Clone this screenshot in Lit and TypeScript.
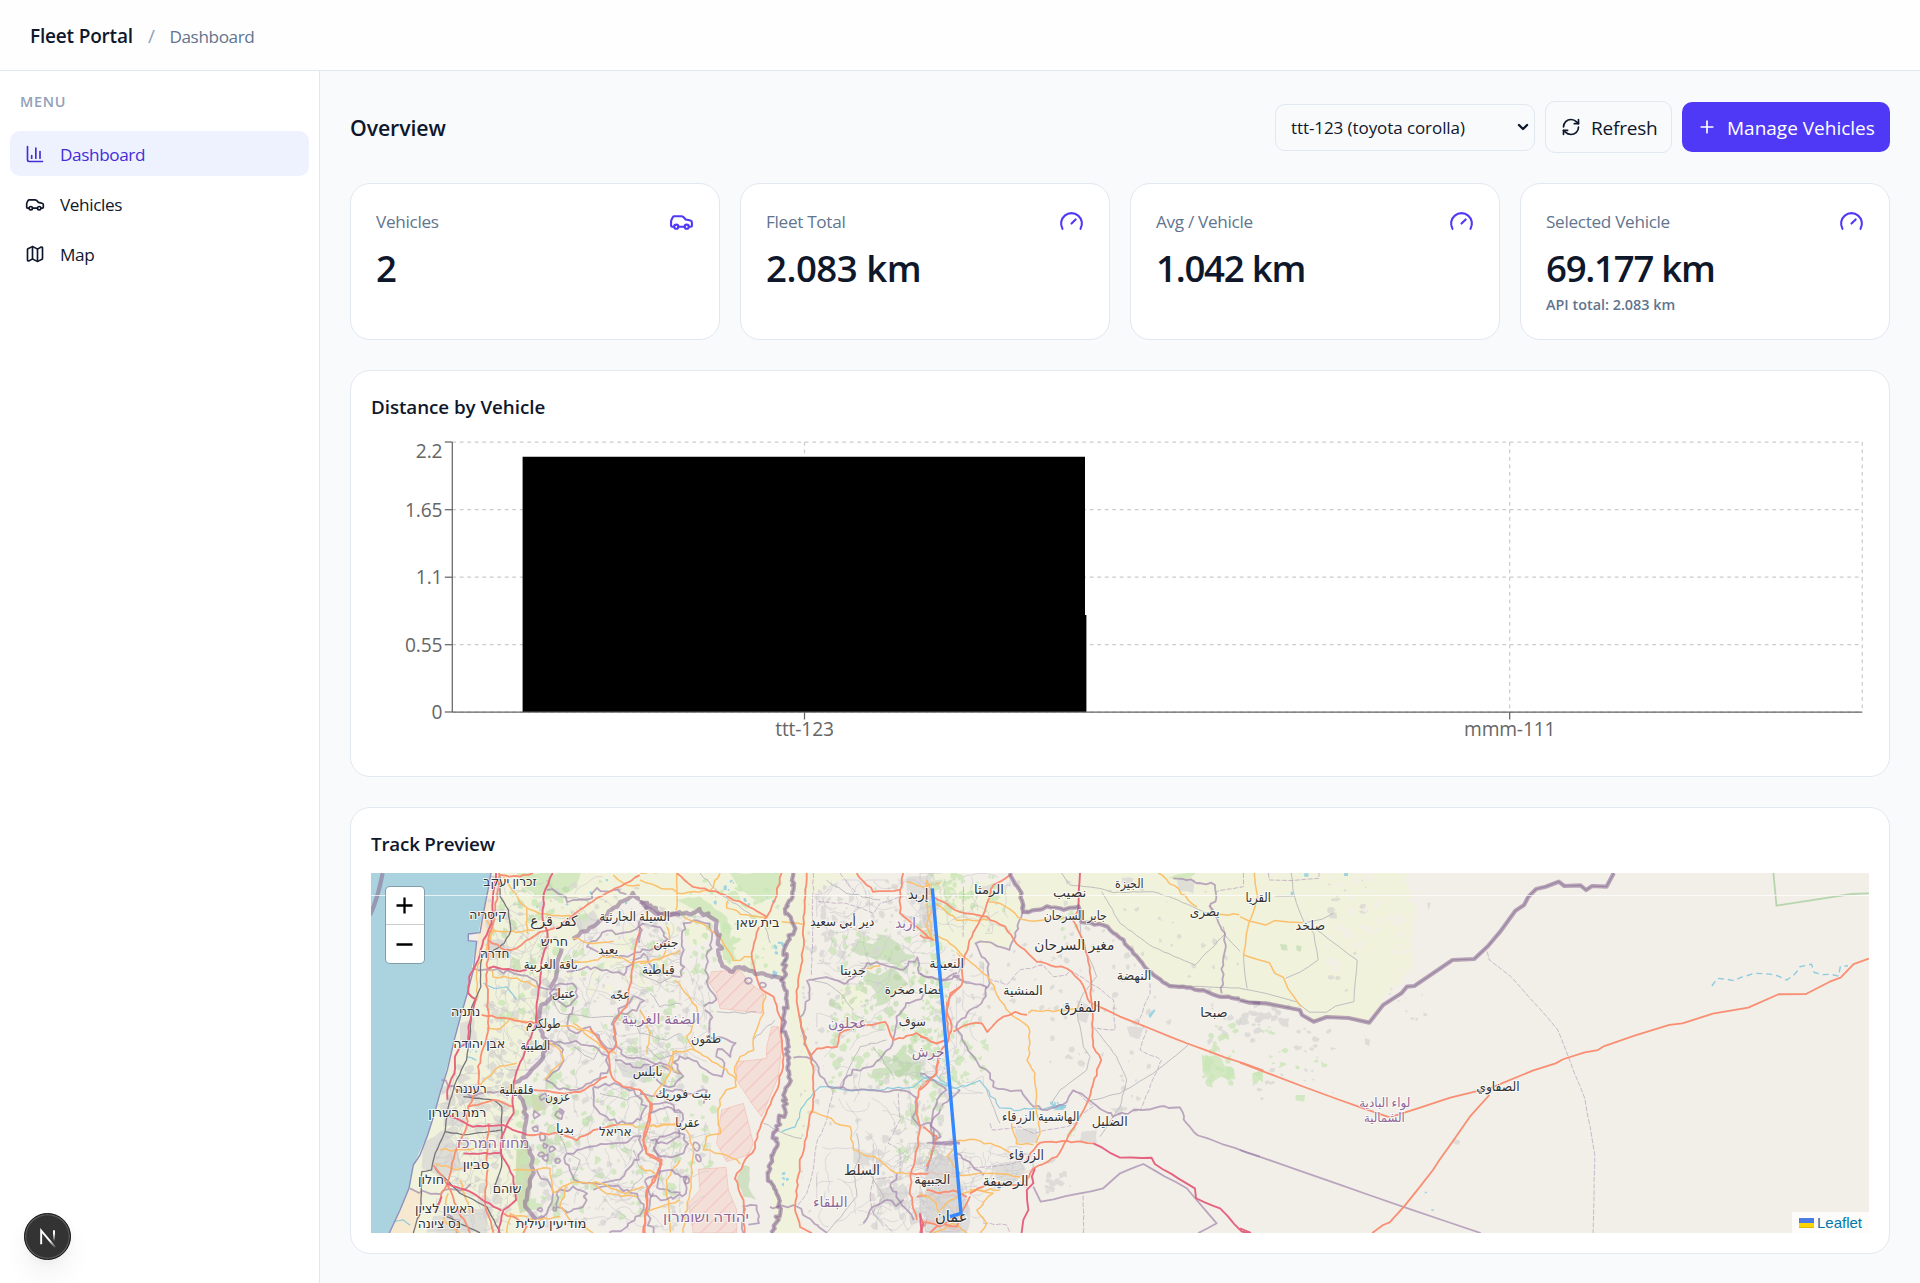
import { LitElement, html, svg, css } from "lit";
import { customElement, property } from "lit/decorators.js";
import { classMap } from "lit/directives/class-map.js";

/* ---------- icons ---------- */

const ICONS: Record<string, unknown> = {
  chart: svg`<path d="M3 3v16a2 2 0 0 0 2 2h16"/><path d="M18 17V9"/><path d="M13 17V5"/><path d="M8 17v-3"/>`,
  car: svg`<path d="M19 17h2c.6 0 1-.4 1-1v-3c0-.9-.7-1.7-1.5-1.9C18.7 10.6 16 10 16 10s-1.3-1.4-2.2-2.3c-.5-.4-1.1-.7-1.8-.7H5c-.6 0-1.1.4-1.4.9l-1.4 2.9A3.7 3.7 0 0 0 2 12v4c0 .6.4 1 1 1h2"/><circle cx="7" cy="17" r="2"/><path d="M9 17h6"/><circle cx="17" cy="17" r="2"/>`,
  map: svg`<path d="M14.106 5.553a2 2 0 0 0 1.788 0l3.659-1.83A1 1 0 0 1 21 4.619v12.764a1 1 0 0 1-.553.894l-4.553 2.277a2 2 0 0 1-1.788 0l-4.212-2.106a2 2 0 0 0-1.788 0l-3.659 1.83A1 1 0 0 1 3 19.381V6.618a1 1 0 0 1 .553-.894l4.553-2.277a2 2 0 0 1 1.788 0z"/><path d="M15 5.764v15"/><path d="M9 3.236v15"/>`,
  gauge: svg`<path d="m12 14 4-4"/><path d="M3.34 19a10 10 0 1 1 17.32 0"/>`,
  refresh: svg`<path d="M3 12a9 9 0 0 1 9-9 9.75 9.75 0 0 1 6.74 2.74L21 8"/><path d="M21 3v5h-5"/><path d="M21 12a9 9 0 0 1-9 9 9.75 9.75 0 0 1-6.74-2.74L3 16"/><path d="M8 16H3v5"/>`,
  plus: svg`<path d="M5 12h14"/><path d="M12 5v14"/>`,
  chevron: svg`<path d="m5 8.5 7 7 7-7" stroke-width="4"/>`,
};

@customElement("ui-icon")
class UiIcon extends LitElement {
  @property() name = "";
  static styles = css`
    :host { display: block; width: 20px; height: 20px; flex: none; }
    .icon { display: block; width: 100%; height: 100%; fill: none; stroke: currentColor; stroke-width: 2; stroke-linecap: round; stroke-linejoin: round; }
  `;
  render() {
    return html`<svg class="icon" viewBox="0 0 24 24">${ICONS[this.name]}</svg>`;
  }
}

/* ---------- stat card ---------- */

@customElement("stat-card")
class StatCard extends LitElement {
  @property() label = "";
  @property() value = "";
  @property() note = "";
  @property() icon = "";
  static styles = css`
    :host { display: block; box-sizing: border-box; height: 157px; padding: 25px; border: 1px solid #e2e8f0; border-radius: 20px; background: #fff; }
    .head { display: flex; justify-content: space-between; height: 25px; }
    .label { font-size: 17.2px; line-height: 26px; letter-spacing: -0.32px; color: #62748e; }
    .icon { width: 25px; height: 25px; color: #4f39f6; }
    .value { margin-top: 9px; font-size: 36.6px; line-height: 50px; font-weight: 600; letter-spacing: -0.5px; color: #0f172b; white-space: nowrap; }
    .tight { letter-spacing: -1.25px; }
    .note { margin-top: 2px; font-size: 14.4px; line-height: 20px; font-weight: 600; color: #62748e; }
  `;
  render() {
    return html`
      <div class="head"><span class="label">${this.label}</span><ui-icon class="icon" name=${this.icon}></ui-icon></div>
      <div class=${classMap({ value: true, tight: this.value.length > 8 || this.value.startsWith("1") })}>${this.value}</div>
      ${this.note ? html`<div class="note">${this.note}</div>` : ""}
    `;
  }
}

/* ---------- bar chart ---------- */

@customElement("distance-chart")
class DistanceChart extends LitElement {
  static styles = css`
    :host { display: block; height: 320px; }
    .plot { display: block; width: 1498px; height: 320px; overflow: visible; }
    .grid { stroke: #ccc; stroke-width: 1.25; stroke-dasharray: 3.75 3.75; fill: none; }
    .axis { stroke: #666; stroke-width: 1.25; fill: none; }
    .tick { fill: #666; font-size: 19.2px; letter-spacing: -0.15px; }
  `;
  render() {
    const ys = [442, 509.7, 577.2, 644.7, 712];
    const labels = ["2.2", "1.65", "1.1", "0.55", "0"];
    const cats = [
      { name: "ttt-123", x: 804.5 },
      { name: "mmm-111", x: 1509.7 },
    ];
    return html`<svg class="plot" viewBox="371 436 1498 320">
      ${ys.map((y) => svg`<path class="grid" d="M452.3 ${y}H1862.3"/>`)}
      ${[...cats.map((c) => c.x), 1862.3].map((x) => svg`<path class="grid" d="M${x} 442V712"/>`)}
      <path d="M522.6 456.7H1085V615h1.4v97H522.6z" fill="#000"/>
      <path class="axis" d="M452.3 442V712M452.3 712H1862.3"/>
      ${ys.map((y) => svg`<path class="axis" d="M444.8 ${y}h7.5"/>`)}
      ${labels.map((t, i) => svg`<text class="tick" x="442.4" y=${(i ? ys[i] : 451) + 7} text-anchor="end">${t}</text>`)}
      ${cats.map((c) => svg`<path class="axis" d="M${c.x} 712v7.5"/><text class="tick" x=${c.x} y="736.3" text-anchor="middle">${c.name}</text>`)}
    </svg>`;
  }
}

/* ---------- map ---------- */

type Pt = [number, number];

const rng = (seed: number) => () => {
  seed = (seed * 1664525 + 1013904223) >>> 0;
  return seed / 4294967296;
};

const pts = (s: string): Pt[] => s.trim().split(/\s+/).map((p) => p.split(",").map(Number) as Pt);

/** Polyline with a natural-looking deviation of `amp` units every `step` units. */
const wig = (s: string, amp = 5, step = 14): string => {
  const p = pts(s);
  const r = rng(p.length * 977 + Math.round(p[0][0] * 13 + p[0][1]));
  let d = `M${p[0]}`;
  for (let i = 1; i < p.length; i++) {
    const [x0, y0] = p[i - 1];
    const [x1, y1] = p[i];
    const n = Math.max(1, Math.round(Math.hypot(x1 - x0, y1 - y0) / step));
    for (let k = 1; k <= n; k++) {
      const e = k === n ? 0.35 : 1;
      const x = x0 + ((x1 - x0) * k) / n + (r() - 0.5) * 2 * amp * e;
      const y = y0 + ((y1 - y0) * k) / n + (r() - 0.5) * 2 * amp * e;
      d += `L${x.toFixed(1)} ${y.toFixed(1)}`;
    }
  }
  return d;
};

/** Many small irregular patches scattered inside a box. */
const patches = (x: number, y: number, w: number, h: number, n: number, size: number, seed: number): string => {
  const r = rng(seed);
  let d = "";
  for (let i = 0; i < n; i++) {
    const cx = x + r() * w;
    const cy = y + r() * h;
    const s = size * (0.35 + r());
    const k = 6;
    for (let j = 0; j < k; j++) {
      const a = (j / k) * Math.PI * 2;
      const q = s * (0.4 + r() * 0.8);
      d += `${j ? "L" : "M"}${(cx + Math.cos(a) * q).toFixed(1)} ${(cy + Math.sin(a) * q).toFixed(1)}`;
    }
    d += "Z";
  }
  return d;
};

/** Meandering short streets in a box. */
const streets = (x: number, y: number, w: number, h: number, n: number, len: number, seed: number): string => {
  const r = rng(seed);
  let d = "";
  for (let i = 0; i < n; i++) {
    let cx = x + r() * w;
    let cy = y + r() * h;
    let a = r() * 6.28;
    d += `M${cx.toFixed(1)} ${cy.toFixed(1)}`;
    for (let k = 0; k < 9; k++) {
      a += (r() - 0.5) * 1.3;
      cx = Math.min(x + w, Math.max(x, cx + (Math.cos(a) * len) / 9));
      cy = Math.min(y + h, Math.max(y, cy + (Math.sin(a) * len) / 9));
      d += `L${cx.toFixed(1)} ${cy.toFixed(1)}`;
    }
  }
  return d;
};

/* Each sheet is surveyed on its own grid: origin (map px) and units per px. */
interface Sheet { ox: number; sx: number }
const SHEETS: Record<string, Sheet> = {
  A: { ox: -11, sx: 1 / 3 },
  B: { ox: 269, sx: 1 / 3 },
  C: { ox: 549, sx: 1 / 3 },
  D: { ox: 869, sx: 680 / 1568 },
};
const on = (k: string, body: unknown) =>
  svg`<g transform="translate(${SHEETS[k].ox} -13) scale(${SHEETS[k].sx} 0.33333)">${body}</g>`;

const lines = (cls: string, list: string[], amp = 3, step = 16) =>
  list.map((s) => svg`<path class="ln ${cls}" d=${wig(s, amp, step)}/>`);
const area = (cls: string, s: string, amp = 4) => svg`<path class=${cls} d=${wig(s, amp, 20) + "Z"}/>`;

type Label = [string, string, number, number, number, string?];
const LABELS: Label[] = [
  ["A", "זכרון יעקב", 450, 68, 160],
  ["A", "קיסריה", 384, 165, 112],
  ["A", "كفر قرع", 582, 183, 142, "lg"],
  ["A", "السيلة الحارثية", 824, 172, 212],
  ["A", "חריש", 583, 246, 82],
  ["A", "חדרה", 404, 282, 88],
  ["A", "يعبد", 745, 271, 60],
  ["B", "جنين", 78, 250, 76],
  ["A", "باقة الغربية", 572, 316, 162],
  ["B", "قباطية", 55, 330, 98],
  ["A", "عتيل", 611, 402, 72],
  ["A", "عجّه", 780, 407, 58],
  ["A", "נתניה", 317, 457, 88],
  ["A", "طولكرم", 550, 494, 104],
  ["A", "אבן יהודה", 358, 552, 156],
  ["A", "الطيبة", 526, 560, 90],
  ["B", "الضفة الغربية", 62, 477, 235, "area"],
  ["A", "نابلس", 863, 638, 90],
  ["A", "רעננה", 333, 689, 94],
  ["A", "قلقيلية", 469, 690, 104],
  ["A", "عزون", 593, 711, 76],
  ["B", "بيت فوريك", 130, 704, 168],
  ["A", "רמת השרון", 292, 761, 174],
  ["A", "بديا", 615, 808, 54],
  ["A", "אריאל", 766, 818, 98],
  ["B", "عقربا", 143, 789, 74],
  ["A", "מחוז המרכז", 399, 849, 218, "area"],
  ["A", "סביון", 348, 915, 80],
  ["A", "חולון", 213, 960, 78],
  ["A", "שוהם", 441, 989, 86],
  ["A", "ראשון לציון", 254, 1048, 178],
  ["A", "נס ציונה", 238, 1093, 130],
  ["A", "מודיעין עילית", 573, 1093, 212],
  ["B", "יהודה ושומרון", 198, 1073, 258, "area"],
  ["B", "בית שאן", 353, 190, 130],
  ["B", "دير أبي سعيد", 607, 187, 192],
  ["B", "إربد", 834, 104, 62, "lg"],
  ["B", "إربد", 797, 190, 62, "area"],
  ["B", "جديتا", 639, 333, 78],
  ["B", "قضاء صخرة", 822, 392, 176],
  ["B", "عجلون", 622, 489, 116, "area"],
  ["B", "سوف", 817, 488, 82],
  ["B", "طمّون", 198, 539, 90],
  ["B", "جرش", 864, 578, 98, "area"],
  ["B", "السلط", 666, 930, 108, "lg"],
  ["B", "الجبيهة", 877, 962, 108],
  ["B", "البلقاء", 571, 1028, 104, "area"],
  ["C", "الرمثا", 207, 90, 90],
  ["C", "نصيب", 449, 100, 100],
  ["C", "الجيزة", 628, 73, 86],
  ["C", "بصرى", 854, 156, 90],
  ["C", "جابر السرحان", 466, 170, 190],
  ["C", "مغير السرحان", 463, 255, 240, "lg"],
  ["C", "النعيمة", 80, 314, 104],
  ["C", "النهضة", 642, 349, 104],
  ["C", "المنشية", 309, 394, 118],
  ["C", "المفرق", 481, 441, 122, "lg"],
  ["C", "صبحا", 882, 461, 82],
  ["C", "الهاشمية الزرقاء", 362, 772, 232],
  ["C", "الضليل", 569, 786, 108],
  ["C", "الزرقاء", 319, 886, 106, "lg"],
  ["C", "الرصيفة", 257, 965, 138, "lg"],
  ["C", "عمان", 94, 1074, 98, "xl"],
  ["D", "القريا", 42, 114, 58],
  ["D", "صلخد", 162, 199, 68],
  ["D", "الصفاوي", 595, 682, 100],
  ["D", "لواء البادية", 334, 731, 118, "area sm"],
  ["D", "الشمالية", 333, 775, 94, "area sm"],
];

@customElement("track-map")
class TrackMap extends LitElement {
  static styles = css`
    :host { display: block; position: relative; height: 360px; overflow: hidden; background: #f2efe9; }
    .canvas { display: block; width: 1498px; height: 360px; }
    .ln { fill: none; vector-effect: non-scaling-stroke; stroke-linejoin: round; stroke-linecap: butt; }
    .sea { fill: #aad3df; }
    .sand { fill: #f7e9d0; }
    .farm { fill: #f0f2dc; }
    .forest { fill: #b4d6a4; opacity: 0.55; }
    .scrub { fill: #c8e6b4; opacity: 0.7; }
    .scrubline { fill: #c8e6b4; opacity: 0.75; }
    .urban { fill: #d9d8d6; opacity: 0.8; }
    .dots { fill: #d5d4d0; opacity: 0.7; }
    .park { fill: #cfdcb4; }
    .mil { fill: #f3dfd8; stroke: #f2bdb3; stroke-width: 2; }
    .milhatch { fill: url(#hatch); }
    .lake { fill: #9fd3e2; }
    .coast { stroke: #8d90bd; stroke-width: 1.4; }
    .motor { stroke: #e5637f; stroke-width: 1.9; }
    .trunk { stroke: #f98e72; stroke-width: 1.8; }
    .prim { stroke: #fbc06c; stroke-width: 1.5; }
    .rail { stroke: #77757a; stroke-width: 1.3; }
    .minor { stroke: #b9b8bb; stroke-width: 0.9; }
    .faint { stroke: #c6c5ca; stroke-width: 0.6; opacity: 0.85; }
    .nation { stroke: #8f7196; stroke-width: 4.2; opacity: 0.6; }
    .nationcore { stroke: #775c86; stroke-width: 1.2; opacity: 0.4; }
    .prov { stroke: #a387ad; stroke-width: 1.8; opacity: 0.7; }
    .dash { stroke: #b69bbb; stroke-width: 1; opacity: 0.65; stroke-dasharray: 5 1.5; }
    .river { stroke: #8ecbdd; stroke-width: 1.2; }
    .wadi { stroke: #8ecbdd; stroke-width: 1.4; stroke-dasharray: 6 4; }
    .reserve { stroke: #a9d0a0; stroke-width: 1.8; opacity: 0.8; }
    .seam { fill: #fff; opacity: 0.8; }
    .track { fill: none; stroke: #3388ff; stroke-width: 3.4; stroke-linecap: butt; stroke-linejoin: round; }
    .lbl { font-family: "Noto Sans", "DejaVu Sans", sans-serif; font-size: 12.8px; font-weight: 500; fill: #333; stroke: #fff; stroke-opacity: 0.75; stroke-width: 2px; paint-order: stroke; text-anchor: middle; }
    .lg { font-size: 14.6px; }
    .xl { font-size: 16px; }
    .area { font-size: 14.6px; fill: #8f6897; }
    .sm { font-size: 12.6px; }
    .zoom { position: absolute; left: 14px; top: 12.5px; width: 39.5px; height: 78.5px; box-sizing: border-box; border: 1.5px solid rgba(0, 0, 0, 0.25); border-radius: 5px; background: #fff; background-clip: padding-box; display: flex; flex-direction: column; overflow: hidden; }
    .step { flex: 1; display: flex; align-items: center; justify-content: center; color: #000; }
    .first { border-bottom: 1px solid #ccc; }
    .glyph { width: 17px; height: 17px; stroke: #000; stroke-width: 2.3; }
    .attr { position: absolute; right: 0; bottom: 0; width: 77px; height: 21px; box-sizing: border-box; padding: 0 6px 0 7px; display: flex; align-items: center; gap: 3px; background: rgba(255, 255, 255, 0.8); color: #0078a8; font: 15px/21px "Liberation Sans", Arial, sans-serif; }
    .flag { width: 15px; height: 10px; flex: none; display: block; }
  `;
  render() {
    return html`
      <svg class="canvas" viewBox="0 0 1498 360">
        <defs>
          <pattern id="hatch" width="34" height="34" patternUnits="userSpaceOnUse" patternTransform="rotate(45)">
            <path d="M0 0V34" stroke="#efb5ac" stroke-width="4" />
          </pattern>
        </defs>
        ${this.westCoast()} ${this.valley()} ${this.northJordan()} ${this.desert()}
        <rect class="seam" x="0" y="22" width="1498" height="0.9" />
        ${LABELS.map(([k, t, cx, cy, w, cls]) => {
          const s = SHEETS[k];
          const drop = cls === "lg" || cls === "area" ? 4.6 : 3.7;
          return svg`<text class="lbl ${cls ?? ""}" x=${(cx * s.sx + s.ox).toFixed(1)} y=${(cy / 3 - 13 + drop).toFixed(1)} textLength=${(w * s.sx).toFixed(1)} lengthAdjust="spacingAndGlyphs">${t}</text>`;
        })}
        <path class="track" d="M561.3 15.3L590 340.3L579 343.7" />
      </svg>
      <div class="zoom">
        <div class="step first"><svg class="glyph" viewBox="0 0 17 17"><path d="M.5 8.5h16M8.5 .5v16" /></svg></div>
        <div class="step"><svg class="glyph" viewBox="0 0 17 17"><path d="M.5 8.5h16" /></svg></div>
      </div>
      <div class="attr">
        <svg class="flag" viewBox="0 0 15 10"><path fill="#4c7be1" d="M0 0h15v5H0z" /><path fill="#ffd500" d="M0 5h15v4H0z" /><path fill="#e0bc00" d="M0 9h15v1H0z" /></svg>
        <span>Leaflet</span>
      </div>
    `;
  }

  private westCoast() {
    const loops = [
      "690,245 740,210 790,220 850,190 900,200 925,240 870,270 790,290 720,280 680,260 690,245",
      "620,335 680,320 740,330 790,345 820,300 850,280 880,330 960,350",
      "590,375 640,370 655,410 620,440 590,420 570,400 590,375",
      "640,440 620,500 650,520 690,500 720,540 760,570 770,520 755,490 790,440 820,410 850,420 830,450 780,460",
      "555,545 600,560 610,600 580,640 560,660 600,690 650,690 700,660 740,640 745,590 700,560 650,545 600,545 555,545",
      "765,600 820,620 900,610 960,640", "770,560 800,590 860,600 930,630",
      "620,880 680,860 760,850 840,830 850,870 800,930 780,960 700,970 640,960 615,910 620,880",
      "590,1000 640,980 680,1000 670,1040 620,1060 590,1040 590,1000",
      "530,930 560,960 580,1000 560,1060 530,1090", "700,990 760,980 830,1000 850,1050 800,1100 750,1119",
      "700,680 760,670 820,690 860,740 840,780 770,790 720,760 700,720 700,680",
      "870,740 930,730 960,760", "880,860 900,900 890,980 960,1000", "880,1000 860,1060 880,1119",
      "335,325 400,330 500,345 535,380 600,390",
      "245,660 290,690 330,710 400,700 455,690", "150,985 210,1000 300,990 330,970", "290,1119 300,1080 260,1060",
      "560,90 600,100 620,125 680,120 710,85 760,90 800,100",
    ];
    return on("A", [
      svg`<path class="sea" d="M33 39H393L385 85 372 150 360 218 325 222V242L350 244 340 330 322 400 303 465 284 535 262 630 240 700 222 765 203 825 180 885 160 915 147 985 120 1050 88 1119H33Z"/>`,
      svg`<path class="farm" d="M393 39H970V165L900 160 820 110 740 170 640 240 600 300 560 400 530 480 545 560 470 670 500 780 520 900 500 1000 500 1119H88L147 985 160 915 203 825 240 700 284 535 322 400 350 244 372 150Z"/>`,
      svg`<path class="sand" d="M147 985L190 1000 178 1080 160 1119H88L120 1050ZM385 85L395 60 392 190 380 240 345 330 350 244Z"/>`,
      area("park", "470,860 500,850 515,930 505,1050 480,1060 465,990"),
      area("park", "510,700 555,710 560,750 520,760"),
      area("scrub", "470,39 660,39 640,90 560,120 500,90"),
      area("scrub", "860,60 960,39 960,90 900,100"),
      area("forest", "455,290 480,300 485,330 460,330"),
      area("urban", "190,850 250,810 290,860 300,930 240,950 185,925"),
      area("urban", "300,490 340,470 350,540 300,560"), area("urban", "280,680 350,670 380,710 300,740"),
      area("urban", "300,1060 380,1040 380,1119 200,1119 220,1070"), area("urban", "255,740 330,760 310,800 250,800"),
      area("urban", "380,240 430,240 440,300 385,300"), area("urban", "640,180 700,150 720,190 660,215"),
      area("urban", "770,610 850,600 900,640 850,670 790,650"),
      svg`<path class="dots" d="${patches(380, 60, 200, 1040, 130, 13, 11)}${patches(540, 60, 420, 1050, 230, 10, 5)}${patches(250, 620, 200, 480, 70, 16, 8)}"/>`,
      svg`<path class="scrubline" d="${patches(540, 400, 420, 700, 110, 12, 21)}${patches(400, 60, 560, 420, 70, 13, 22)}${patches(470, 640, 140, 420, 45, 16, 29)}"/>`,
      svg`<path class="forest" d="${patches(600, 500, 330, 520, 16, 11, 31)}${patches(430, 80, 200, 300, 14, 13, 32)}"/>`,
      svg`<path class="farm" d="${patches(620, 200, 330, 200, 22, 22, 77)}"/>`,
      svg`<path class="lake" d="${patches(390, 60, 560, 80, 14, 4, 41)}${patches(330, 560, 30, 50, 4, 4, 43)}"/>`,
      svg`<path class="ln faint" d="${streets(385, 50, 180, 580, 60, 110, 51)}${streets(230, 640, 220, 470, 60, 100, 52)}${streets(560, 50, 400, 1060, 110, 130, 53)}"/>`,
      lines("minor", ["600,820 620,880 660,900 640,960", "640,560 700,600 720,560", "560,60 600,110 680,120", "720,700 800,720 850,700", "820,870 850,950 790,1010", "570,400 600,460 680,470 760,470", "870,400 900,440 960,430", "800,460 840,520 920,540 960,520"]),
      lines("river", ["370,370 400,385 440,380 470,420", "100,1085 130,1080 150,1095", "320,590 350,600"]),
      svg`<path class="ln coast" d="M393 39L385 85 372 150 360 218 325 222V242L350 244 340 330 322 400 303 465 284 535 262 630 240 700 222 765 203 825 180 885 160 915 147 985 120 1050 88 1119"/>`,
      svg`<path class="ln nation" d="M68 39C60 80 50 125 30 165"/>`,
      lines("prov", loops, 7, 15),
      svg`<path class="ln prov" d="${patches(520, 690, 90, 240, 11, 11, 61)}${patches(530, 990, 60, 90, 4, 9, 62)}"/>`,
      lines("nation", ["960,165 900,165 860,145 820,100 780,125 740,165 690,205 640,235", "605,265 590,340 570,385", "600,400 545,435 530,490 560,540 545,600 510,640 460,670", "475,700 490,730 500,780 490,830 510,870 520,930 510,980 495,1040 530,1080"], 5, 13),
      lines("prim", [
        "430,50 480,130 540,160 640,170", "385,215 440,215 520,212 560,200", "500,145 500,220", "760,45 800,75 900,80 960,75", "850,45 960,90",
        "390,320 400,350 470,355 530,380", "380,505 420,505 450,475 528,490", "560,490 640,500 700,520", "640,490 720,560 770,580",
        "560,545 600,570 610,600 570,640 555,660", "640,235 700,250 760,245", "600,310 700,300 760,285 820,310", "820,310 900,300 960,270",
        "355,680 420,620 470,610", "240,870 330,870 380,855", "225,910 290,930 380,915", "460,930 570,925 580,1000 640,965 720,970 800,1000 850,980",
        "770,795 860,800 960,790", "620,975 600,1040 630,1080 700,1119", "700,970 740,1000 830,1010", "850,1060 900,1040 960,1020", "950,570 920,620 960,640", "300,960 330,1060", "840,450 870,520 860,580", "370,170 400,210 350,330 350,420",
        "265,1000 250,1080 300,1119", "440,1119 450,1060 520,1080 600,1070", "960,900 920,960 930,1119",
      ], 4),
      lines("rail", ["418,39 420,110 445,150 452,212 432,250 400,272 370,282 362,310 362,380 335,440 330,530 320,600 290,660 262,750 255,815 225,880 215,930 185,935 182,1050 160,1119", "310,710 400,720 425,740 425,920 405,975", "255,815 310,825 425,810", "225,925 300,1000 380,1040 420,1119", "260,1070 360,1119"], 1.5),
      lines("trunk", [
        "418,39 412,100 400,190 385,240 380,360 385,500 372,560 355,620 355,680 325,740 320,800 285,880 270,940 225,1060", "220,915 260,970 290,1040 330,1119",
        "385,240 435,270 470,265 540,215 600,200 660,150 740,100 840,45", "365,465 430,475 528,490", "385,790 380,960 375,1040 400,1119", "500,825 600,820 650,840 700,810 770,795",
        "420,45 480,50 520,39", "690,505 745,580 755,650 790,680 840,690 875,730 870,780 850,840 860,880 905,900 895,930 865,990 850,1119",
        "840,200 820,300 800,440 760,490 770,560 745,580", "520,690 600,700 660,695 740,650", "325,740 400,720 460,740", "430,1060 470,1075 500,1100 490,1119",
      ], 3),
      lines("motor", ["408,39 398,120 395,190 370,240 355,300 328,350 325,400 348,418 325,500 325,545 300,560 285,590 283,640 262,690 262,720", "578,39 552,100 548,180 562,215 560,260 545,300 540,370 530,430 528,490 500,560 475,620 460,670 458,720 462,760 440,795 425,830 422,880 460,950 468,1020 430,1050 415,1119", "385,325 400,320 480,335 500,328", "265,765 340,800 430,795 500,825", "310,880 420,880", "245,1010 225,1060", "260,970 300,985 340,1000 400,1040 425,1052"], 2),
    ]);
  }

  private valley() {
    const mil = ["215,335 300,330 325,365 370,400 370,460 320,455 240,445 230,400 205,365", "395,500 415,500 425,560 415,650 365,770 335,730 290,660 290,605 345,600 380,595 380,560", "245,750 310,730 325,790 340,850 325,885 260,905 230,850", "175,928 258,922 265,990 290,1050 290,1119 160,1119 145,1030 180,990"];
    return on("B", [
      svg`<path class="farm" d="M0 39H960V190L900 160 860 39H700L600 60 520 100 500 300 480 420 520 600 515 740 480 880 465 1060 480 1119H405L385 930 415 830 435 700 455 580 430 360 330 345 250 325 235 190 200 155 110 155 0 120Z"/>`,
      svg`<path class="farm" d="M600 375L690 380 660 450 600 450ZM130 190L190 185 210 240 150 260Z"/>`,
      area("scrub", "270,39 420,39 410,110 360,130 300,90"), area("scrub", "110,120 180,110 260,170 290,300 250,300 240,190"),
      area("forest", "630,270 660,240 700,255 720,220 760,240 800,280 830,290 780,310 720,300 660,290", 8), area("forest", "680,330 720,345 760,320 800,370 770,390 740,430 700,440 710,400 680,370", 8),
      area("forest", "760,590 780,570 800,580 850,610 820,660 760,640 690,655 700,630 750,620", 8),
      area("forest", "310,915 330,920 325,980 350,1020 310,1010 290,960"),
      area("forest", "815,750 835,750 830,800 810,790"),
      area("urban", "800,50 870,45 890,150 880,230 860,210 840,130 800,100"), area("urban", "720,990 790,970 810,1000 780,1030 720,1030"), area("urban", "640,870 690,880 690,920 640,910"),
      area("urban", "850,900 950,880 960,1119 900,1119 840,1050 860,980"), area("urban", "710,260 730,265 725,285 710,280"),
      svg`<path class="dots" d="${patches(520, 60, 420, 230, 75, 11, 12)}${patches(500, 300, 450, 500, 75, 9, 13)}${patches(680, 800, 270, 300, 55, 14, 14)}${patches(0, 180, 200, 900, 60, 10, 15)}${patches(480, 60, 30, 1050, 22, 6, 16)}"/>`,
      svg`<path class="scrubline" d="${patches(560, 200, 380, 500, 150, 12, 23)}${patches(780, 650, 130, 250, 38, 11, 24)}${patches(0, 240, 230, 700, 60, 11, 25)}${patches(120, 50, 300, 280, 45, 13, 26)}${patches(860, 40, 100, 130, 22, 13, 27)}"/>`,
      svg`<path class="forest" d="${patches(560, 400, 130, 120, 16, 10, 33)}${patches(640, 240, 180, 220, 22, 13, 34)}${patches(700, 540, 160, 130, 18, 13, 35)}${patches(790, 330, 130, 280, 24, 9, 36)}"/>`,
      svg`<path class="lake" d="${patches(200, 60, 220, 90, 12, 6, 44)}${patches(400, 240, 40, 110, 8, 7, 45)}${patches(428, 915, 16, 60, 5, 9, 46)}"/>`,
      mil.map((m) => svg`<path class="mil" d="M${m.replace(/ /g, "L")}Z"/><path class="milhatch" d="M${m.replace(/ /g, "L")}Z"/>`),
      svg`<path class="ln faint" d="${streets(530, 60, 420, 250, 40, 130, 54)}${streets(530, 300, 420, 800, 50, 130, 55)}${streets(0, 170, 210, 930, 40, 120, 56)}${streets(700, 850, 250, 260, 50, 90, 57)}"/>`,
      lines("minor", ["180,39 250,110 340,170", "375,200 390,250", "0,340 60,370 100,345", "20,560 60,600 110,580", "230,455 300,460 350,455", "370,790 430,820 485,835", "515,360 560,370 600,400 640,450", "560,60 620,100 720,120", "650,820 660,890 640,940 650,1010 560,1119", "340,540 370,510 405,480", "600,680 630,620 660,560 740,540", "700,560 740,620 760,650", "690,940 730,1010 700,1060 730,1100"]),
      lines("river", ["425,815 465,800 480,760 500,720 540,680 575,680 620,690 700,690 820,680 850,655 890,645 930,680 960,690"], 4),
      lines("dash", ["520,39 515,350", "580,690 560,780 530,850 515,950 500,1000 470,1040", "535,125 620,130 700,160 720,130 790,110", "600,39 650,100", "775,700 780,780 745,850 780,870 780,940", "690,1010 700,960 760,950", "690,1010 700,1060 760,1119"], 2),
      lines("prov", [
        "505,360 560,350 620,370 680,310 720,310 790,330 830,290 835,340 890,360 960,350", "500,360 510,400 480,470 500,560 520,600", "520,600 540,650 580,685 620,690 700,690 780,690 830,710", "600,685 640,630 700,620 740,570 760,540 770,470 800,430 870,400",
        "830,710 820,780 840,800 870,790 900,830 880,870 860,930", "460,593 500,590 520,600", "960,690 910,730 875,780 880,850 960,850", "860,850 900,850 960,850", "130,190 160,180 210,190 215,240 195,330 205,380 230,420 190,440", "0,180 0,250", "125,350 130,270 130,190", "195,450 215,470 210,530 260,540 285,550 270,590 235,565 230,590 255,610 245,650 200,630 160,600 120,590 100,605 130,650 90,680 50,660", "0,700 40,710 80,690 150,700 200,690 190,730", "30,760 80,740 130,760 120,830 80,850 30,840", "40,870 60,830 120,820 145,850 130,880 60,890 40,870", "15,960 80,930 140,950 140,1000 80,1020 30,1010 15,960", "310,1119 310,1040 350,1035 355,1090 325,1095", "390,1040 470,1040 500,1070 560,1119", "670,1090 690,1050 740,1020 770,1040 790,1020", "770,940 750,980 770,1010 820,1080",
      ], 6, 14),
      svg`<path class="ln prov" d="M320 355c15-5 22 10 8 16-12 2-18-12-8-16ZM365 368c14-2 18 12 5 14s-14-12-5-14ZM162 848c12-4 22 12 14 22s-22-10-14-22ZM170 884c10 0 16 14 10 20s-18-16-10-20ZM136 950c12 0 16 16 6 20s-16-18-6-20Z"/>`,
      lines("prim", [
        "510,755 560,770 600,795 630,800 640,870 700,890 770,940 810,940", "0,60 50,80 110,95", "110,39 108,150", "130,170 200,200 240,230 265,270 280,300 335,290", "265,120 260,145 320,165 380,170", "105,360 170,440 175,470 140,530 165,570 245,620 290,660", "375,400 370,460 345,520 340,570 300,590 285,620 290,680 260,690 240,720 235,780 240,820 200,830 190,870 260,885 300,912",
        "425,185 490,195", "20,800 100,795 140,810 160,860 150,1000 130,1119", "165,570 100,575 90,640 40,710", "0,310 70,290 90,240 80,200", "240,40 210,90 110,100", "680,325 720,318", "860,60 860,130 880,240 930,250 960,290", "800,65 850,80 900,70", "950,860 920,890 960,940", "870,990 900,1030 960,1050", "0,920 60,950", "50,39 0,39",
      ], 4),
      lines("trunk", [
        "500,39 492,190 490,270 470,410 478,470 495,550 520,620 520,720 500,830 480,900 465,1040 480,1100 515,1119", "425,39 405,120 380,170 350,220 335,280 350,350 360,385 400,410 425,480 430,620 405,700 370,780 352,820 345,865 310,910 285,955 310,1020 313,1119", "110,39 160,80 240,100 310,130 380,170",
        "510,590 530,565 590,560 600,520 640,500 700,495 735,485 760,540 830,520 890,550 920,540", "650,39 700,95 780,90 790,39", "780,90 780,160 830,200 880,240", "0,690 30,730 25,780 10,840 20,880 65,910 50,950 20,990 15,1119", "895,590 890,640 835,690 830,760 840,800 830,870 815,930 810,1000 830,1080", "850,800 890,830 880,860 860,920", "810,940 960,940", "830,1010 900,1000 960,1010", "840,1119 860,1080 960,1110", "870,1119 900,1090 950,1100", "960,380 930,400 920,440 925,540 895,590",
      ], 3),
      lines("motor", ["840,1060 850,1090 845,1119"], 2),
      lines("nation", ["0,125 60,160 140,160 180,150 225,180 235,240 245,310 270,332 300,322 380,345 425,360", "460,39 458,90 435,160 465,200 435,260 432,330 430,370 440,420 430,500 445,560 440,620 450,660 430,700 435,750 400,820 415,850 390,910 385,960 415,1010 420,1060 395,1119"], 7, 9),
      lines("nationcore", ["460,39 458,90 435,160 465,200 435,260 432,330 430,370 440,420 430,500 445,560 440,620 450,660 430,700 435,750 400,820 415,850 390,910 385,960 415,1010 420,1060 395,1119"], 7, 9),
    ]);
  }

  private northJordan() {
    return on("C", [
      svg`<path class="farm" d="M285 39H1030V425L900 405 850 388 750 375 700 340 650 288 610 240 550 195 485 183 470 148 420 140 350 148 308 155ZM55 100L200 60 300 100 308 155 270 270 165 245 130 290 50 240Z"/>`,
      area("scrub", "745,55 790,39 830,39 800,60"), area("scrub", "845,585 900,590 915,620 945,625 945,655 900,650 870,675 850,640", 9), area("scrub", "1000,640 1030,630 1030,670"),
      area("urban", "620,500 670,505 660,535 630,530"), area("urban", "770,60 825,60 820,100 780,95"), area("urban", "285,805 350,805 350,850 290,850"), area("urban", "485,815 530,810 530,850 480,845"), area("urban", "605,55 640,55 635,85 610,80"), area("urban", "20,950 60,890 100,920 130,980 150,1060 140,1119 20,1119"), area("urban", "220,915 290,900 320,930 280,970 230,960"), area("urban", "470,420 510,440 500,490 475,480"), area("urban", "170,80 220,70 210,110"), area("urban", "570,745 610,740 600,770"), area("lake", "420,732 438,735 430,750 400,750"),
      svg`<path class="dots" d="${patches(60, 60, 400, 420, 50, 9, 17)}${patches(380, 200, 400, 420, 45, 9, 18)}${patches(380, 900, 80, 100, 16, 10, 19)}${patches(560, 60, 440, 300, 22, 8, 20)}${patches(860, 390, 160, 160, 16, 11, 71)}${patches(0, 400, 90, 400, 25, 10, 72)}${patches(600, 640, 60, 120, 9, 8, 73)}"/>`,
      svg`<path class="scrubline" d="${patches(40, 50, 220, 110, 40, 12, 28)}${patches(90, 480, 110, 200, 35, 10, 37)}${patches(0, 300, 70, 300, 30, 11, 38)}${patches(420, 150, 60, 100, 9, 10, 39)}${patches(860, 490, 90, 90, 16, 11, 40)}${patches(840, 590, 100, 80, 18, 14, 47)}${patches(440, 800, 30, 40, 5, 8, 48)}"/>`,
      svg`<path class="lake" d="${patches(395, 728, 45, 18, 8, 8, 49)}M685 465l18-18 3 6-16 22z"/>`,
      svg`<path class="ln faint" d="${streets(0, 40, 270, 180, 26, 110, 58)}${streets(0, 850, 190, 265, 60, 80, 59)}${streets(190, 860, 150, 130, 26, 60, 60)}${streets(60, 300, 130, 400, 20, 100, 63)}"/>`,
      lines("minor", ["425,39 450,75 540,85 580,98 700,95 760,115 860,160", "480,190 485,240 530,350 490,400 470,450 490,560 510,590 500,630 420,690 395,730", "545,95 600,190 700,262 825,315 915,222 910,200", "750,375 980,385 1020,375", "915,225 970,285 980,385", "520,500 590,590 620,660 600,740 540,830", "500,725 600,700 700,640 805,555", "130,300 110,360 150,365", "200,690 240,790"], 1.5),
      lines("river", ["0,645 60,670 110,685 180,660 240,745 300,750 380,745 440,735"], 4),
      lines("dash", ["130,80 130,230", "205,355 260,375 300,330 370,315 400,350 440,345 450,330 530,380 580,420 585,510 530,505", "690,370 690,400 655,490 680,510 660,570 725,600 660,750", "490,1119 490,1000", "210,790 215,810 300,800 340,820 440,800 470,790", "970,39 970,80 890,95", "460,690 520,740 490,760", "140,925 260,915 330,900", "190,1090 260,1095 270,1119"], 2),
      lines("prov", ["308,155 270,270 205,245 165,250 205,310 210,370 195,385", "100,350 140,370 200,380 185,430 140,460 110,500 140,560 180,620 210,640 220,680 260,690 305,690 330,730 380,750 440,725 460,690 550,750 580,770 655,750 720,740 780,742 800,790 830,825", "0,340 60,360 110,340", "0,640 80,690 50,720 35,780 40,850 110,850", "110,880 140,900 165,925 190,945", "880,150 870,140 915,222 905,400", "760,55 800,60 885,75 890,110 870,140"], 5, 14),
      lines("prov", ["830,825 1020,890", "340,980 362,1025 550,985 600,940 670,912 800,985 890,1090 835,1119"], 1.2, 40),
      lines("prim", ["40,225 80,240 130,290 205,350 240,420 280,470 325,500 330,580 320,600 345,640 350,690 350,760 360,820 350,850", "325,460 335,450 400,455 480,440", "40,125 110,180 205,180", "205,125 240,130 310,180 380,180 440,170", "715,39 830,140", "860,160 1005,165", "1005,39 1008,160 985,200 970,285 1030,303", "100,845 150,838 225,855 280,885", "275,790 290,850 340,855", "100,950 200,940 300,950", "150,990 220,1000 170,1050 200,1090 180,1119", "20,60 40,130 20,200 40,240", "60,1050 90,1020 160,990 240,990", "0,1000 40,1020 60,1060", "40,1119 100,1090 140,1119"], 4),
      lines("trunk", ["40,110 120,155 200,170 255,200 290,250 350,305 440,325 480,360 510,430", "270,45 220,75 190,165 155,230 130,300 125,375 90,410 80,450 95,500 85,540", "55,590 50,640 0,690", "0,530 50,550 85,540", "475,150 460,180 490,240 510,320 515,430 520,560 543,600 500,730 470,790 440,840 410,890 340,925 320,960", "100,515 150,492 185,490 202,515 235,480 285,455 320,465", "520,850 440,843 360,848 330,880 320,900", "0,225 40,240", "20,990 60,1000 100,990 140,1010", "0,1080 60,1100 120,1060 150,1010", "30,1119 60,1090 110,1100 130,1060", "150,1000 200,970 320,975"], 3),
      lines("trunk", ["515,430 600,470 800,550 1030,632"], 1, 60),
      lines("motor", ["480,39 475,150", "520,850 600,893 695,893 705,912 825,985 828,1015 900,1045 965,1115 990,1119", "345,925 335,950 340,970 320,990 325,1050 310,1080 305,1119", "0,1060 5,1119"], 1.5, 30),
      lines("nation", ["270,39 300,90 310,157 350,150 380,140 430,150 475,140 485,187 550,195 610,240 650,290 700,345 750,378 850,390 900,410 960,415 1020,428"], 3, 12),
      lines("nationcore", ["270,39 300,90 310,157 350,150 380,140 430,150 475,140 485,187 550,195 610,240 650,290 700,345 750,378 850,390 900,410 960,415 1020,428"], 3, 12),
    ]);
  }

  private desert() {
    const border = "M0 420L22 428 60 430 138 450 143 465 170 485 200 471 250 474 298 488 330 435 372 400 385 380 402 378 490 300 540 297 572 258 600 215 635 152 655 135 665 110 683 87 705 80 735 65 748 78 785 76 798 90 812 78 845 80 862 39";
    return on("D", [
      area("farm", "30,39 385,39 390,100 405,160 395,230 395,320 340,400 298,482 250,474 200,470 170,480 140,450 0,420 0,39", 6),
      svg`<path class="dots" d="${patches(0, 440, 110, 100, 20, 11, 74)}${patches(120, 500, 110, 80, 16, 8, 75)}${patches(200, 60, 90, 340, 14, 9, 76)}${patches(340, 380, 100, 120, 9, 6, 78)}${patches(20, 620, 200, 110, 12, 7, 79)}M490 835l18 8-4 12-14-6zM208 152l14 6 2 18-18-2zM432 128l8 0-6 24zM288 535l12 4-2 20-10-8z"/>`,
      svg`<path fill="#f2efe9" opacity=".8" d="${patches(190, 50, 210, 300, 60, 11, 80)}"/>`,
      svg`<path class="scrubline" d="${patches(45, 500, 30, 25, 5, 8, 81)}${patches(65, 570, 130, 60, 10, 7, 82)}M28 640l22-8-2 25-18 22zM128 705l22 0-2 20-20-4z"/>`,
      svg`<path class="forest" d="M92 252l16 2 2 18-14-2zM130 255l12 4-2 16-10-4z"/>`,
      svg`<path class="lake" d="M148 40h10v10h-10zM240 39h9v9h-9zM117 95h6v10h-6zM426 995h5v5h-5zM441 1048h6v4h-6z"/>`,
      lines("minor", ["118,39 122,90 130,130 148,188 170,220 180,300 140,335 105,355", "165,200 230,262 270,300 263,425 220,438 200,457 160,457 130,425 60,400 0,385", "150,188 190,178 215,160", "80,108 125,108", "8,285 16,385"], 1.5, 30),
      lines("dash", ["570,275 575,300 625,350 733,510 760,600 795,715 818,885 814,1119", "8,39 8,80 0,82", "65,39 68,60 120,62 182,55 182,39"], 0.8, 40),
      lines("prov", ["0,870 380,1042 555,1119"], 0.5, 80),
      lines("reserve", ["1230,39 1237,137 1410,102 1450,100"], 0.3, 80),
      lines("wadi", ["1088,378 1100,355 1140,362 1185,340 1240,348 1260,360 1285,335 1290,320 1318,312 1325,338 1380,348 1385,320 1402,318"], 3, 20),
      lines("prim", ["33,39 40,110 30,160 20,190 8,285 68,308 80,340 100,352 110,385 140,440", "0,170 20,182 60,195 80,182 145,188"], 1.5, 30),
      lines("trunk", ["0,608 225,718 345,772 410,745 485,713 580,683 675,632 728,610 745,598 795,577 825,570 840,558 910,527 990,495 1020,490 1090,461 1172,443 1242,403 1305,402 1360,365 1385,353 1415,312 1450,296", "575,705 530,770 490,845 460,900 445,930 378,1040 345,1087 330,1095 305,1119"], 0.5, 80),
      lines("motor", ["0,1105 25,1119"], 0),
      svg`<path class="ln nation" d=${border}/><path class="ln nationcore" d=${border}/>`,
    ]);
  }
}

/* ---------- page ---------- */

@customElement("app-root")
class AppRoot extends LitElement {
  static styles = css`
    :host { display: flex; flex-direction: column; position: relative; width: 1920px; height: 1283px; overflow: hidden; background: #f8fafc; color: #0f172b; font-family: "Open Sans", "Noto Sans", sans-serif; }
    .topbar { box-sizing: border-box; height: 71px; flex: none; display: flex; align-items: center; padding: 2px 30px 0; border-bottom: 1px solid #e2e8f0; background: #fefefe; }
    .brand { font-size: 19px; font-weight: 600; letter-spacing: -0.18px; }
    .slash { margin: 0 14.5px 0 15px; font-size: 19px; color: #90a1b9; }
    .crumb { font-size: 17.2px; letter-spacing: -0.4px; color: #62748e; }
    .body { flex: 1; display: flex; min-height: 0; }
    .side { box-sizing: border-box; width: 320px; flex: none; padding: 20px 10px 0; border-right: 1px solid #e2e8f0; background: #fff; }
    .menu { padding: 0 10px; font-size: 14.4px; line-height: 22px; font-weight: 600; letter-spacing: 0.75px; color: #90a1b9; }
    .nav { display: flex; flex-direction: column; gap: 5px; margin-top: 18px; }
    .item { display: flex; align-items: center; gap: 15px; height: 45px; padding: 0 15px; border-radius: 10px; font-size: 17.2px; letter-spacing: -0.4px; }
    .item span { padding-top: 1px; }
    .active { background: #eef2ff; color: #432dd7; }
    .main { flex: 1; display: flex; flex-direction: column; gap: 30px; padding: 30px 30px 0; min-width: 0; }
    .row { display: flex; align-items: center; justify-content: space-between; height: 52px; }
    .title { margin: 0; font-size: 21.3px; font-weight: 600; letter-spacing: -0.1px; }
    .tools { display: flex; align-items: center; gap: 10px; }
    .select { box-sizing: border-box; width: 260px; height: 47px; display: flex; align-items: center; justify-content: space-between; padding: 1px 4px 0 15px; border: 1px solid #e2e8f0; border-radius: 10px; font-size: 17px; letter-spacing: -0.08px; }
    .chev { width: 14px; height: 14px; margin-bottom: 1px; }
    .btn { box-sizing: border-box; display: flex; align-items: center; gap: 10px; width: 127px; height: 52px; padding: 0 15px; border: 1px solid #e2e8f0; border-radius: 10px; font-size: 19px; letter-spacing: -0.2px; white-space: nowrap; }
    .btn span { padding-top: 1px; }
    .primary { width: 208px; height: 50px; border: 0; background: #4f39f6; color: #fff; letter-spacing: 0; }
    .stats { display: grid; grid-template-columns: repeat(4, 1fr); gap: 20px; }
    .card { box-sizing: border-box; padding: 20px; border: 1px solid #e2e8f0; border-radius: 20px; background: #fff; }
    .heading { margin: 0 0 14px; padding-top: 1px; font-size: 18.8px; line-height: 30px; font-weight: 600; letter-spacing: -0.05px; }
    .snug { letter-spacing: -0.2px; }
    .badge { position: absolute; left: 23.7px; top: 1212.5px; width: 47.5px; height: 47.5px; box-sizing: border-box; border-radius: 50%; border: 1.3px solid #111; background: #333; box-shadow: inset 0 0 0 1.3px #5a5a5a, 0 16px 32px -8px rgba(0, 0, 0, 0.12), 0 2px 10px rgba(0, 0, 0, 0.04); }
    .mark { display: block; width: 100%; height: 100%; fill: none; }
  `;
  render() {
    return html`
      <header class="topbar"><span class="brand">Fleet Portal</span><span class="slash">/</span><span class="crumb">Dashboard</span></header>
      <div class="body">
        <aside class="side">
          <div class="menu">MENU</div>
          <nav class="nav">
            ${[["chart", "Dashboard"], ["car", "Vehicles"], ["map", "Map"]].map(([icon, name], i) => html`
              <div class=${classMap({ item: true, active: i === 0 })}><ui-icon name=${icon}></ui-icon><span>${name}</span></div>`)}
          </nav>
        </aside>
        <main class="main">
          <div class="row">
            <h1 class="title">Overview</h1>
            <div class="tools">
              <div class="select"><span>ttt-123 (toyota corolla)</span><ui-icon class="chev" name="chevron"></ui-icon></div>
              <div class="btn"><ui-icon name="refresh"></ui-icon><span>Refresh</span></div>
              <div class="btn primary"><ui-icon name="plus"></ui-icon><span>Manage Vehicles</span></div>
            </div>
          </div>
          <section class="stats">
            <stat-card label="Vehicles" value="2" icon="car"></stat-card>
            <stat-card label="Fleet Total" value="2.083 km" icon="gauge"></stat-card>
            <stat-card label="Avg / Vehicle" value="1.042 km" icon="gauge"></stat-card>
            <stat-card label="Selected Vehicle" value="69.177 km" note="API total: 2.083 km" icon="gauge"></stat-card>
          </section>
          <section class="card"><h2 class="heading">Distance by Vehicle</h2><distance-chart></distance-chart></section>
          <section class="card"><h2 class="heading snug">Track Preview</h2><track-map></track-map></section>
        </main>
      </div>
      <div class="badge">
        <svg class="mark" viewBox="0 0 45 45">
          <defs>
            <linearGradient id="fadeA" gradientUnits="userSpaceOnUse" x1="16" y1="15" x2="30" y2="34"><stop offset=".6" stop-color="#fff" /><stop offset="1" stop-color="#fff" stop-opacity="0" /></linearGradient>
            <linearGradient id="fadeB" gradientUnits="userSpaceOnUse" x1="0" y1="16" x2="0" y2="27"><stop offset=".3" stop-color="#fff" /><stop offset="1" stop-color="#fff" stop-opacity="0" /></linearGradient>
          </defs>
          <path d="M16 30V16.5L30 33" stroke="url(#fadeA)" stroke-width="1.9" />
          <path d="M28.7 16V27" stroke="url(#fadeB)" stroke-width="1.9" />
        </svg>
      </div>
    `;
  }
}
